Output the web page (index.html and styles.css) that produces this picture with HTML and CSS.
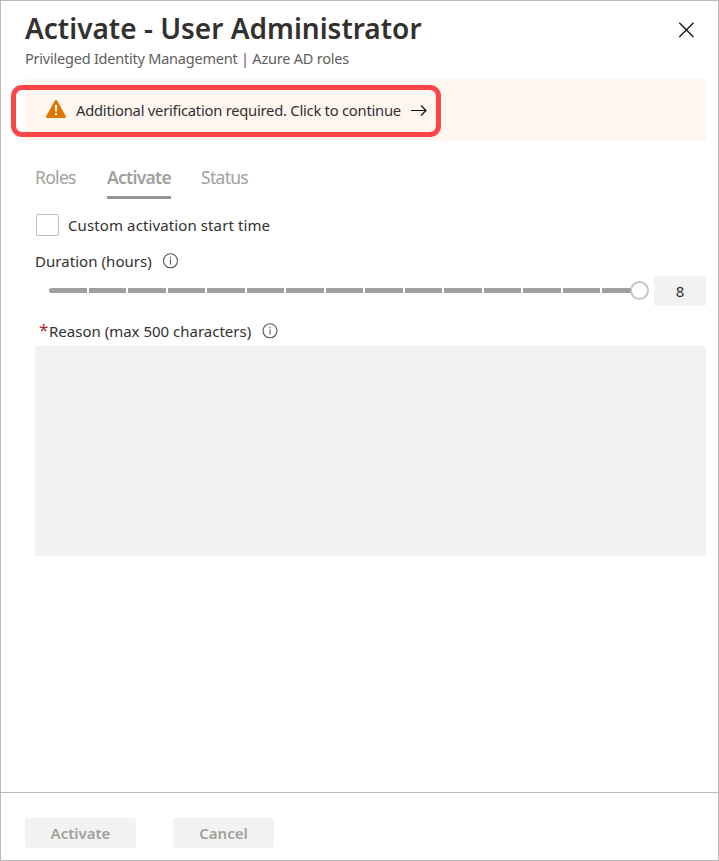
FILE: index.html
```html
<!DOCTYPE html>
<html lang="en">
<head>
<meta charset="utf-8">
<title>Activate - User Administrator</title>
<link rel="stylesheet" href="styles.css">
</head>
<body>
<div class="panel">
  <header class="header">
    <div>
      <h1 class="title"><span>Activate - User Administrator</span></h1>
      <p class="subtitle"><span>Privileged Identity Management | Azure AD roles</span></p>
    </div>
    <svg class="close" width="16" height="16" viewBox="0 0 16 16"><path d="M1.3.8l14.2 14.2M15.5.8L1.3 15" fill="none" stroke="#111" stroke-width="1.3"/></svg>
  </header>
  <div class="banner">
    <svg class="warning" width="20" height="18" viewBox="0 0 20 18"><path d="M8.7.8q1.3-1.5 2.6 0L19.7 16q.7 1.8-1 2H1.3q-1.7-.2-1-2z" fill="#db7500"/><path d="M8.9 5h2.2l-.3 6.6H9.2zM9 13h2v2.2H9z" fill="#fff"/></svg>
    <span class="banner-text">Additional verification required. Click to continue</span>
    <svg class="arrow" width="16" height="12" viewBox="0 0 16 12"><path d="M0 6.5h15M10 1.5l5 5-5 5" fill="none" stroke="#111" stroke-width="1.2"/></svg>
    <div class="highlight"></div>
  </div>
  <main class="content">
    <nav class="tabs">
      <span class="tab tab-roles">Roles</span>
      <span class="tab tab-active">Activate</span>
      <span class="tab tab-status">Status</span>
    </nav>
    <label class="check-row"><span class="checkbox"></span><span class="check-text">Custom activation start time</span></label>
    <div class="label-row">
      <span class="duration-text">Duration (hours)</span>
      <svg class="info" width="16" height="16" viewBox="0 0 16 16"><circle cx="7.5" cy="7.8" r="7" fill="none" stroke="#5c5a58" stroke-width="1.1"/><path d="M7.5 6.3v5.2M7.5 3.8v1.4" stroke="#5c5a58" stroke-width="1.1"/></svg>
    </div>
    <div class="slider-row">
      <div class="slider">
        <i></i><i></i><i></i><i></i><i></i><i></i><i></i><i></i><i></i><i></i><i></i><i></i><i></i><i></i><i></i>
        <b class="thumb"></b>
      </div>
      <div class="value">8</div>
    </div>
    <div class="label-row reason-row">
      <span class="star">*</span><span class="reason-text">Reason (max 500 characters)</span>
      <svg class="info" width="16" height="16" viewBox="0 0 16 16"><circle cx="8" cy="7.8" r="7" fill="none" stroke="#5c5a58" stroke-width="1.1"/><path d="M8 6.3v5.2M8 3.8v1.4" stroke="#5c5a58" stroke-width="1.1"/></svg>
    </div>
    <div class="reason-box"></div>
  </main>
  <footer class="footer">
    <div class="button button-activate"><span>Activate</span></div>
    <div class="button button-cancel"><span>Cancel</span></div>
  </footer>
</div>
</body>
</html>
```
FILE: styles.css
```css
* { box-sizing: border-box; }
body { margin: 0; background: #fff; }
.panel {
  display: flex;
  flex-direction: column;
  width: 719px;
  height: 861px;
  border: 1px solid #bababa;
  font-family: "Noto Sans", "Open Sans", sans-serif;
  font-size: 15px;
  color: #323130;
  white-space: nowrap;
}
.header {
  display: flex;
  justify-content: space-between;
  height: 78px;
  padding: 7px 24px 0 24px;
}
.title { margin: 0; font-size: 28px; line-height: 40px; font-weight: 600; }
.subtitle { margin: 0; font-size: 14.5px; line-height: 20px; letter-spacing: -0.22px; color: #605e5c; }
.close { margin-top: 14px; }
.banner {
  position: relative;
  display: flex;
  align-items: center;
  height: 62px;
  margin: 0 12px 0 24px;
  padding-left: 21px;
  border-radius: 2px;
  background: #fff6f0;
}
.warning { margin-top: -3px; margin-right: 10px; }
.banner-text { width: 325px; font-size: 14.75px; letter-spacing: -0.24px; }
.arrow { margin-left: 10px; }
.highlight {
  position: absolute;
  left: -14px;
  top: 6px;
  width: 430px;
  height: 52px;
  border: 5px solid #fd4447;
  border-radius: 11px;
}
.content { flex: 1; padding: 24px 12px 0 34px; }
.tabs { display: flex; height: 34px; font-size: 17.5px; line-height: 25px; letter-spacing: -0.7px; color: #a19f9d; }
.tab-roles { width: 72px; }
.tab-active { width: 64px; margin-right: 30px; border-bottom: 3px solid #979593; font-weight: 600; letter-spacing: -0.72px; }
.check-row { display: flex; align-items: center; height: 24px; margin-top: 14px; }
.checkbox { width: 23px; height: 22px; margin: 0 9px 0 1px; border: 1px solid #bebbb8; border-radius: 2px; }
.check-text { letter-spacing: 0.11px; }
.label-row { display: flex; align-items: center; height: 20px; margin-top: 14px; }
.duration-text { width: 118px; letter-spacing: 0.05px; }
.info { margin-left: 10px; }
.slider-row { display: flex; justify-content: space-between; height: 30px; margin-top: 5px; }
.slider { position: relative; display: flex; gap: 2px; width: 591px; height: 5px; margin: 12px 0 0 14px; }
.slider i { flex: 1; background: #a19f9d; }
.slider i:first-child { border-radius: 3px 0 0 3px; }
.thumb { position: absolute; right: -9px; top: -7px; width: 19px; height: 19px; border: 2px solid #c8c6c4; border-radius: 50%; background: #fff; }
.value { width: 52px; height: 30px; border-radius: 2px; background: #f3f2f1; line-height: 31px; text-align: center; }
.reason-row { margin-top: 15px; padding-left: 4px; }
.star { width: 10px; color: #a4262c; font-size: 17px; line-height: 20px; margin-top: -2px; }
.reason-text { width: 203px; }
.reason-box { height: 210px; margin-top: 5px; border-radius: 2px; background: #f3f2f1; }
.footer { display: flex; gap: 37px; height: 68px; padding: 25px 24px 0; border-top: 1px solid #bababa; }
.button { height: 30px; border-radius: 2px; background: #f3f2f1; color: #a19f9d; font-weight: 600; line-height: 30px; text-align: center; }
.button-activate { width: 111px; }
.button-cancel { width: 101px; }
```
